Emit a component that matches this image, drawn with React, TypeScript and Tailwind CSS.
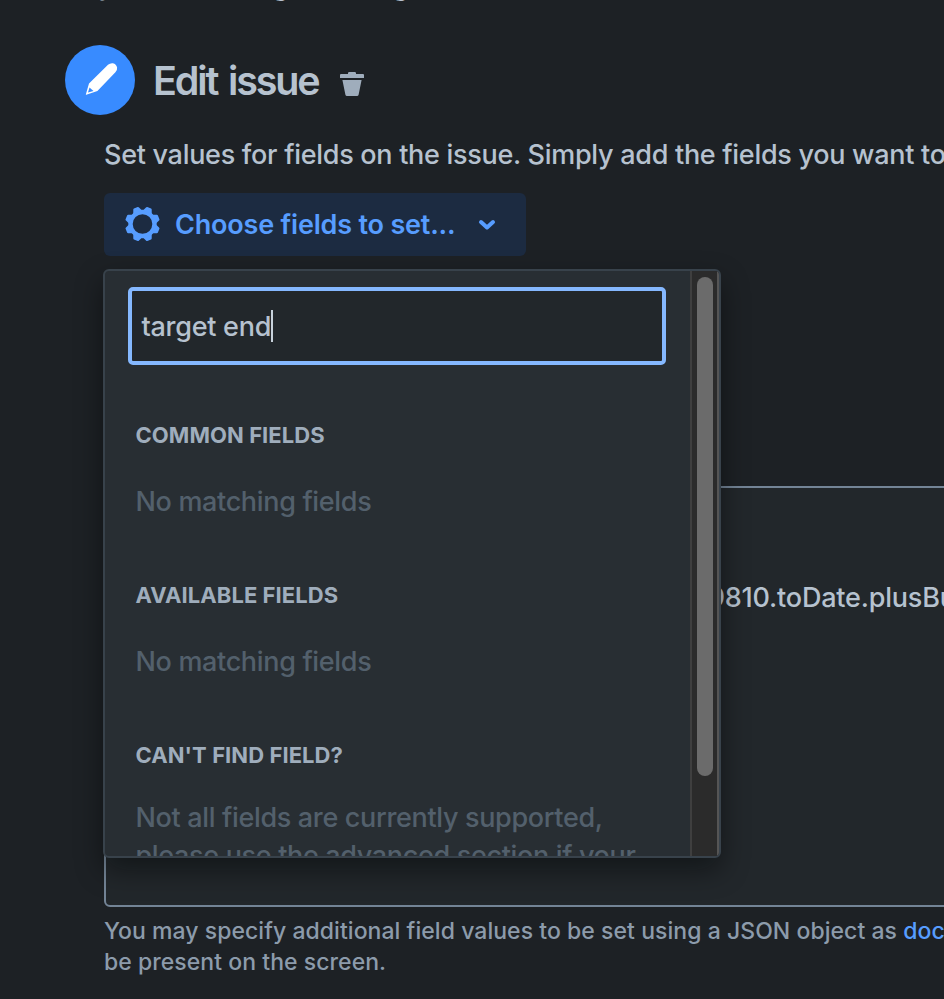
import { ReactNode } from "react";

function PencilIcon() {
  return (
    <svg width="36" height="36" viewBox="0 0 36 36" fill="none">
      <path
        d="M6 21.6 25 2.8q2.2-2 4.9-1.6 3.4.8 4.2 4.2.4 2.6-1.7 4.9L14.4 28.9 3.3 32.8q-.6.1-.4-.5z"
        fill="#fff"
      />
      <path d="M6.5 25.4 5 30.6l5.5-1.7z" fill="#388bff" />
    </svg>
  );
}

function TrashIcon() {
  return (
    <svg width="24" height="24" viewBox="0 0 24 24" fill="#9fadbc">
      <path d="M8 1.2Q8 0 9.2 0h5.6Q16 0 16 1.2V2h7a1 1 0 0 1 1 1v3H0V3a1 1 0 0 1 1-1h7zM2.4 8h19.2l-3 14.7q-.3 1.3-1.6 1.3H7q-1.3 0-1.6-1.3z" />
    </svg>
  );
}

function GearIcon() {
  return (
    <svg className="mb-[2px]" width="36" height="36" viewBox="-18.5 -18 36 36" fill="none">
      <circle r="12" stroke="#579dff" strokeWidth="4.4" />
      <g fill="#579dff">
        {[22.5, 67.5, 112.5, 157.5, 202.5, 247.5, 292.5, 337.5].map((angle) => (
          <path
            key={angle}
            d="M-4.8-12.6l1.7-4q.3-.9 1.1-.9h4q.8 0 1.1.9l1.7 4z"
            transform={`rotate(${angle})`}
          />
        ))}
      </g>
    </svg>
  );
}

function ChevronIcon() {
  return (
    <svg width="18" height="12" viewBox="0 0 18 12" fill="none">
      <path
        d="M3 3l6 5.5L15 3"
        stroke="#579dff"
        strokeWidth="4"
        strokeLinecap="round"
        strokeLinejoin="round"
      />
    </svg>
  );
}

function FieldGroup({ title, children }: { title: string; children: ReactNode }) {
  return (
    <section className="h-[160px] pl-[7.5px]">
      <h2 className="text-[22px] leading-7 font-bold tracking-[0.07px] text-[#9fadbc] uppercase">
        {title}
      </h2>
      {children}
    </section>
  );
}

function FieldMenu() {
  return (
    <div className="absolute top-[76px] -left-px flex h-[589px] w-[618px] overflow-hidden rounded-md border-2 border-[#38424b] bg-[#282e33] shadow-[0_12px_28px_rgba(3,4,4,0.45)]">
      <div className="min-w-0 flex-1 overflow-hidden pt-4 pr-6 pl-[23px]">
        <div className="flex h-[78px] items-center rounded-[5px] border-4 border-[#85b8ff] bg-[#22272b] pl-[9.5px] text-[27px] tracking-[-0.28px] text-[#b6c2cf]">
          <span className="pt-[2px]">target end</span>
          <span className="h-8 w-[2px] bg-[#c7d1db]" />
        </div>
        <div className="pt-[56px] text-[27px] leading-[38px] font-[450] tracking-[-0.34px] whitespace-nowrap text-[#53606c]">
          <FieldGroup title="Common fields">
            <p className="mt-[34px]">No matching fields</p>
          </FieldGroup>
          <FieldGroup title="Available fields">
            <p className="mt-[34px]">No matching fields</p>
          </FieldGroup>
          <FieldGroup title="Can't find field?">
            <p className="mt-[30px]">
              Not all fields are currently supported,
              <br />
              please use the advanced section if your
            </p>
          </FieldGroup>
        </div>
      </div>
      <div className="flex w-[29px] justify-center border-r-2 border-l-2 border-r-[#555] border-l-[#3f3f3f] bg-[#2b2b2b] pt-[6px] pl-px">
        <div className="h-[499px] w-4 rounded-full bg-[#6b6b6b]" />
      </div>
    </div>
  );
}

export default function App() {
  return (
    <main className="flex h-[999px] w-[944px] flex-col overflow-hidden bg-[#1d2125] font-['Inter','Liberation_Sans',sans-serif] font-[450] text-[#b6c2cf]">
      <div className="h-[45px] shrink-0 overflow-hidden">
        <p className="-mt-[31px] flex text-right text-[27px] leading-[34px]">
          <span className="w-[114px]">by</span>
          <span className="w-[175px]">matching</span>
          <span className="w-[120px]">editing</span>
        </p>
      </div>
      <header className="flex h-[70px] shrink-0 items-center pl-[65px]">
        <div className="flex size-[70px] items-center justify-center rounded-full bg-[#388bff] pl-[2px]">
          <PencilIcon />
        </div>
        <h1 className="ml-[18px] w-[166px] pt-[3px] text-[39.5px] font-[580] tracking-[-2.15px] [word-spacing:3px] whitespace-nowrap">
          Edit issue
        </h1>
        <div className="mt-2 ml-[21px]">
          <TrashIcon />
        </div>
      </header>
      <div className="pl-[104px]">
        <p className="mt-[22px] h-[36px] text-[27px] leading-[36px] tracking-[-0.29px] whitespace-nowrap">
          Set values for fields on the issue. Simply add the fields you want to
        </p>
        <div className="relative mt-[20px]">
          <button className="flex h-[63px] w-[422px] items-center rounded-md bg-[#1c2b41] pl-5 text-[27px] font-[560] tracking-[-0.19px] text-[#579dff]">
            <GearIcon />
            <span className="mt-px ml-[15px] w-[281px] text-left whitespace-nowrap">
              Choose fields to set...
            </span>
            <span className="mt-px ml-[22px]">
              <ChevronIcon />
            </span>
          </button>
          <FieldMenu />
        </div>
        <div className="mt-[230px] h-[421px] w-[900px] rounded-md border-2 border-[#738496] bg-[#22272b] pt-[92px] pl-[602px] text-[27px] leading-[36px] tracking-[-0.2px] whitespace-nowrap">
          9810.toDate.plusBusinessDays
        </div>
        <p className="mt-[9px] text-[23px] leading-[31px] tracking-[0.05px] whitespace-nowrap text-[#8c9bab]">
          You may specify additional field values to be set using a JSON object as{" "}
          <a className="text-[#579dff]">documented</a>
          <br />
          be present on the screen.
        </p>
      </div>
    </main>
  );
}
